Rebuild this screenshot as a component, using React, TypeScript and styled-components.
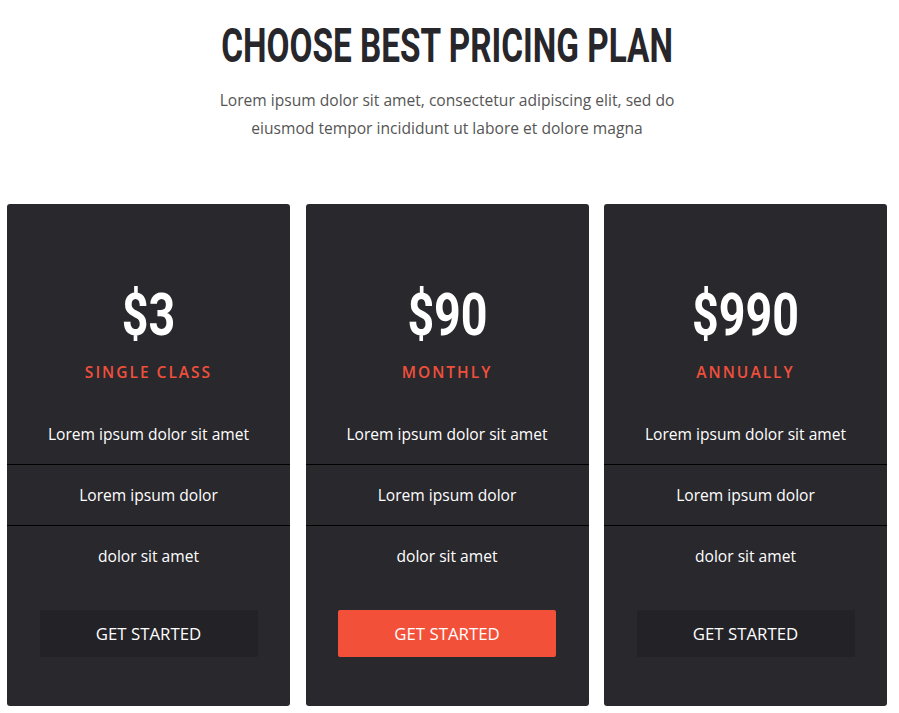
import React from "react";
import styled, { createGlobalStyle } from "styled-components";

const GlobalStyle = createGlobalStyle`
  html, body { margin: 0; padding: 0; background: #ffffff; }
  body { font-family: "Open Sans", "Liberation Sans", sans-serif; }
  * { box-sizing: border-box; }
`;

const Page = styled.div`
  width: 899px;
  padding: 0 12px 0 7px;
`;

const Header = styled.header`
  display: flex;
  flex-direction: column;
  align-items: center;
  padding-top: 16px;
`;

const Title = styled.h1`
  margin: 0;
  font-family: "Roboto", "Liberation Sans", sans-serif;
  font-weight: 700;
  font-size: 49px;
  line-height: 60px;
  color: #27262b;
  text-transform: uppercase;
  white-space: nowrap;
  transform: scaleX(0.68);
`;

const Subtitle = styled.p`
  margin: 10px 0 0;
  width: 500px;
  text-align: center;
  font-size: 15.6px;
  line-height: 28px;
  color: #555555;
`;

const Grid = styled.div`
  display: grid;
  grid-template-columns: repeat(3, 283px);
  column-gap: 15.5px;
  margin-top: 62px;
`;

const Card = styled.div`
  background: #29282d;
  border-radius: 3px;
  display: flex;
  flex-direction: column;
  align-items: stretch;
  padding: 76px 0 49px;
`;

const Price = styled.div`
  font-family: "Roboto", "Liberation Sans", sans-serif;
  font-weight: 700;
  font-size: 59px;
  line-height: 70px;
  color: #ffffff;
  text-align: center;
  transform: scaleX(0.79);
`;

const Label = styled.div`
  margin-top: 12px;
  text-align: center;
  font-size: 15.5px;
  line-height: 20px;
  letter-spacing: 2px;
  font-weight: 600;
  color: #f0503b;
  text-transform: uppercase;
`;

const Features = styled.ul`
  list-style: none;
  margin: 22px 0 0;
  padding: 0;
`;

const Feature = styled.li`
  height: 61px;
  display: flex;
  align-items: center;
  justify-content: center;
  font-size: 15.6px;
  color: #ffffff;
  border-top: 1px solid #000000;
  padding-bottom: 1px;
  &:first-child {
    border-top: none;
    height: 60px;
  }
`;

const Button = styled.button<{ $primary?: boolean }>`
  align-self: center;
  margin-top: 24px;
  width: 218px;
  height: 47px;
  border: none;
  border-radius: 2px;
  background: ${(p) => (p.$primary ? "#f3503a" : "#232227")};
  color: #ffffff;
  font-family: "Open Sans", "Liberation Sans", sans-serif;
  font-size: 16.8px;
  text-transform: uppercase;
  cursor: pointer;
`;

const plans = [
  { price: "$3", label: "Single Class", primary: false },
  { price: "$90", label: "Monthly", primary: true },
  { price: "$990", label: "Annually", primary: false },
];

const features = ["Lorem ipsum dolor sit amet", "Lorem ipsum dolor", "dolor sit amet"];

export default function App() {
  return (
    <>
      <GlobalStyle />
      <Page>
        <Header>
          <Title>Choose Best Pricing Plan</Title>
          <Subtitle>
            Lorem ipsum dolor sit amet, consectetur adipiscing elit, sed do eiusmod tempor
            incididunt ut labore et dolore magna
          </Subtitle>
        </Header>
        <Grid>
          {plans.map((p) => (
            <Card key={p.price}>
              <Price>{p.price}</Price>
              <Label>{p.label}</Label>
              <Features>
                {features.map((f) => (
                  <Feature key={f}>{f}</Feature>
                ))}
              </Features>
              <Button $primary={p.primary}>Get Started</Button>
            </Card>
          ))}
        </Grid>
      </Page>
    </>
  );
}
